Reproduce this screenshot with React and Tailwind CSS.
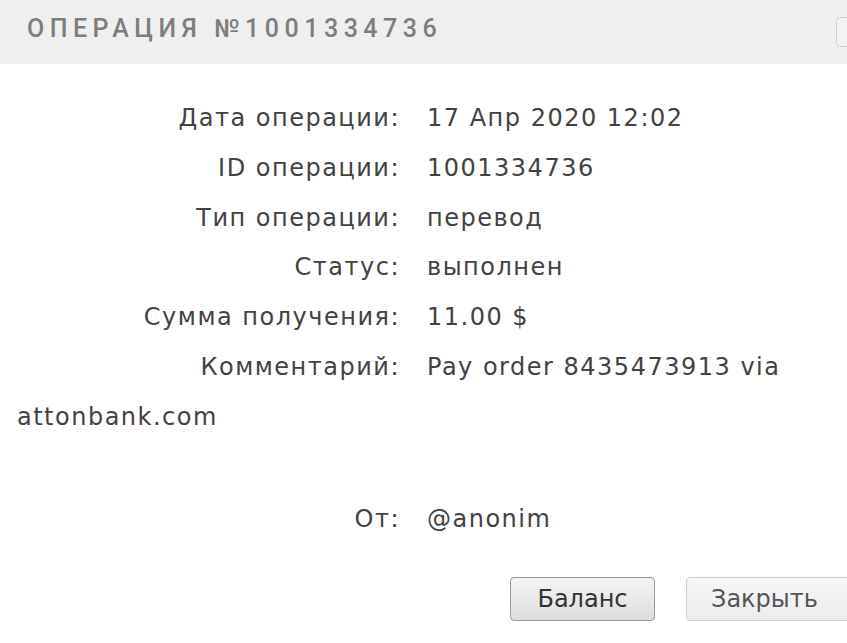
export default function App() {
  const rows = [
    ["Дата операции:", "17 Апр 2020 12:02"],
    ["ID операции:", "1001334736"],
    ["Тип операции:", "перевод"],
    ["Статус:", "выполнен"],
    ["Сумма получения:", "11.00 $"],
    ["Комментарий:", "Pay order 8435473913 via attonbank.com"],
  ];
  return (
    <div className="w-[847px] h-[643px] overflow-hidden bg-white">
      <div className="h-[64px] bg-[#efefef] flex items-start pl-[27px] pt-[16px] overflow-hidden">
        <div
          className="text-[25px] leading-[25px] font-medium tracking-[5.5px] text-[#7d7d7d]"
          style={{ fontFamily: 'Roboto, sans-serif' }}
        >
          ОПЕРАЦИЯ №1001334736
        </div>
        <div className="ml-auto mr-[-20px] mt-[1px] w-[31px] h-[30px] border border-[#cfcfcf] rounded-[4px] bg-[#f3f3f3] shrink-0" />
      </div>
      <div
        className="pl-[17px] pt-[30px] pr-[20px] text-[24px] tracking-[1.5px] text-[#424242] leading-[49.8px]"
        style={{ fontFamily: '"DejaVu Sans", sans-serif' }}
      >
        {rows.map(([l, v]) => (
          <div key={l}>
            <span className="inline-block w-[383px] text-right mr-[27px]">{l}</span>
            {v}
          </div>
        ))}
        <div className="mt-[52px]">
          <span className="inline-block w-[383px] text-right mr-[27px]">От:</span>
          @anonim
        </div>
      </div>
      <div
        className="flex gap-[31px] pl-[510px] mt-[33px] text-[24px]"
        style={{ fontFamily: '"DejaVu Sans", sans-serif' }}
      >
        <button className="w-[145px] h-[44px] shrink-0 rounded-[4px] border border-[#9a9a9a] bg-gradient-to-b from-[#f4f4f4] to-[#dedede] text-[#333]">
          Баланс
        </button>
        <button className="w-[165px] h-[44px] shrink-0 rounded-[4px] border border-[#cdcdcd] bg-gradient-to-b from-[#f8f8f8] to-[#ececec] text-[#555] text-left pl-[24px]">
          Закрыть
        </button>
      </div>
    </div>
  );
}
